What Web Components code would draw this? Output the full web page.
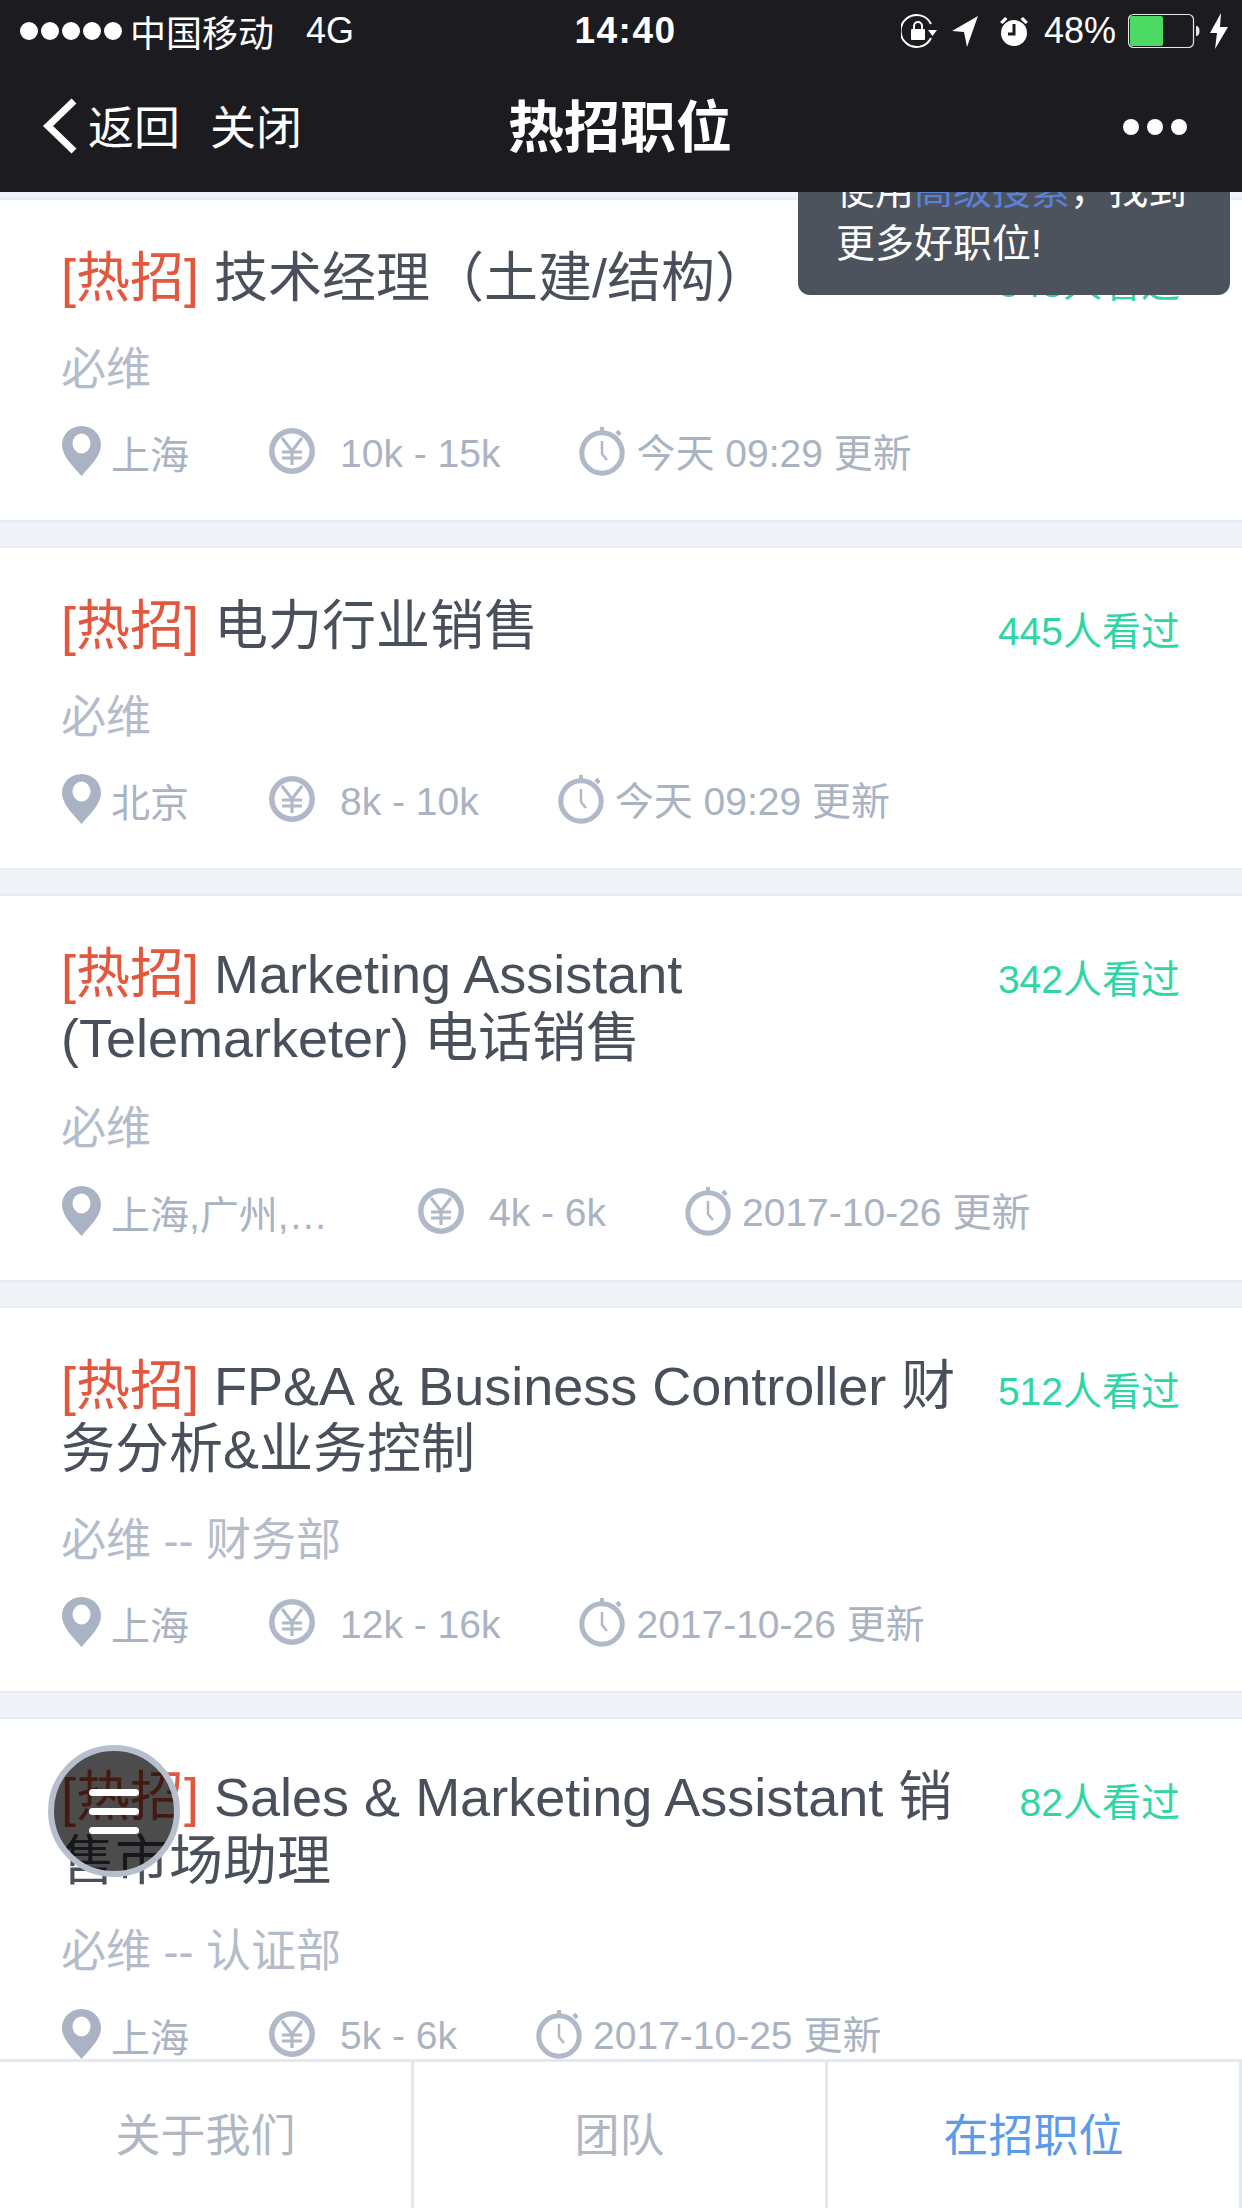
<!DOCTYPE html>
<html lang="zh">
<head>
<meta charset="utf-8">
<title>热招职位</title>
<style>
    html, body {
        margin: 0;
        padding: 0;
        height: 2208px;
        overflow: hidden;
        font-family: "Liberation Sans", "Noto Sans CJK SC", sans-serif;
    }
</style>
</head>
<body>
<job-app>
    <status-bar slot="top"></status-bar>
    <nav-bar slot="top" heading="热招职位"></nav-bar>
    <search-tip slot="overlay">使用<a>高级搜索</a>&#xFF0C;找到更多好职位!</search-tip>
    <menu-fab slot="overlay"></menu-fab>

    <job-card views="548" company="必维" place="上海" pay="10k - 15k" updated="今天 09:29 更新">技术经理&#xFF08;土建/结构&#xFF09;</job-card>
    <job-card views="445" company="必维" place="北京" pay="8k - 10k" updated="今天 09:29 更新">电力行业销售</job-card>
    <job-card views="342" company="必维" place="上海,广州,深圳,北京" pay="4k - 6k" updated="2017-10-26 更新">Marketing Assistant (Telemarketer) 电话销售</job-card>
    <job-card views="512" company="必维 -- 财务部" place="上海" pay="12k - 16k" updated="2017-10-26 更新">FP&amp;A &amp; Business Controller 财务分析&amp;业务控制</job-card>
    <job-card views="82" company="必维 -- 认证部" place="上海" pay="5k - 6k" updated="2017-10-25 更新">Sales &amp; Marketing Assistant 销售市场助理</job-card>

    <tab-bar slot="bottom"></tab-bar>
</job-app>

<script>
const FONT = `"Liberation Sans", "Noto Sans CJK SC", sans-serif`;

class JobApp extends HTMLElement {
    constructor() {
        super();
        this.attachShadow({ mode: "open" }).innerHTML = `
            <style>
                :host {
                    display: flex;
                    flex-direction: column;
                    position: relative;
                    height: 2208px;
                    overflow: hidden;
                    background: #f0f4f8;
                    font-family: ${FONT};
                }
                header { position: relative; z-index: 2; }
                main {
                    flex: 1;
                    min-height: 0;
                    overflow: hidden;
                    display: flex;
                    flex-direction: column;
                    gap: 24px;
                    padding-top: 6px;
                }
                footer { position: relative; z-index: 1; }
            </style>
            <header><slot name="top"></slot></header>
            <main><slot></slot></main>
            <footer><slot name="bottom"></slot></footer>
            <slot name="overlay"></slot>`;
    }
}

class StatusBar extends HTMLElement {
    constructor() {
        super();
        this.attachShadow({ mode: "open" }).innerHTML = `
            <style>
                :host {
                    display: flex;
                    align-items: center;
                    height: 62px;
                    padding: 0 14px 0 20px;
                    background: #1b1b20;
                    color: #fff;
                    font-size: 36px;
                }
                .left, .right { flex: 1; display: flex; align-items: center; }
                .right { justify-content: flex-end; }
                .dots { display: flex; gap: 3px; margin-right: 8px; }
                .dots i { width: 18px; height: 18px; border-radius: 50%; background: #fff; }
                .net { margin-left: 32px; }
                time { font-weight: bold; font-size: 37px; letter-spacing: 1.500px; margin-left: 3px; }
                svg { display: block; flex: none; }
                .pct { margin: 0 12px 0 14px; }
            </style>
            <div class="left">
                <span class="dots"><i></i><i></i><i></i><i></i><i></i></span>
                <span>中国移动</span><span class="net">4G</span>
            </div>
            <time>14:40</time>
            <div class="right">
                <svg width="36" height="36" viewBox="0 0 36 36" fill="none" stroke="#fff" stroke-width="2">
                    <path d="M30 11A16 16 0 1 0 30 25"/>
                    <path d="M27 17h9l-4.500 6z" fill="#fff" stroke="none"/>
                    <rect x="10" y="16" width="14" height="11" rx="1" fill="#fff" stroke="none"/>
                    <path d="M13 16v-3a4 4 0 0 1 8 0v3"/>
                </svg>
                <svg style="margin-left:14px" width="28" height="34" viewBox="0 0 28 34" fill="#fff">
                    <path d="M27 2L16 33l-3-15L1 17z"/>
                </svg>
                <svg style="margin-left:19px" width="32" height="34" viewBox="0 0 32 34">
                    <circle cx="16" cy="19" r="13" fill="#fff"/>
                    <path d="M2 8l5-5 2.500 2-5 5zM30 8l-5-5-2.500 2 5 5z" fill="#fff"/>
                    <path d="M16 10v10h-6" fill="none" stroke="#1b1b20" stroke-width="3"/>
                </svg>
                <span class="pct">48%</span>
                <svg width="72" height="36" viewBox="0 0 72 36">
                    <rect x="0.500" y="1.500" width="65" height="33" rx="5" fill="none" stroke="#e8e8e8" stroke-width="1.200"/>
                    <rect x="2" y="3" width="33" height="30" rx="2" fill="#4cd964"/>
                    <path d="M68 13c2.500 0 3.500 2 3.500 5s-1 5-3.500 5z" fill="#e8e8e8"/>
                </svg>
                <svg style="margin-left:10px" width="18" height="36" viewBox="0 0 18 36" fill="#fff">
                    <path d="M11 0L0 20h7l-2 16L18 14h-8z"/>
                </svg>
            </div>`;
    }
}

class NavBar extends HTMLElement {
    constructor() {
        super();
        this.attachShadow({ mode: "open" }).innerHTML = `
            <style>
                :host {
                    display: flex;
                    align-items: center;
                    position: relative;
                    box-sizing: border-box;
                    height: 130px;
                    padding: 0 55px 6px 42px;
                    background: #1b1b20;
                    color: #fff;
                    font-size: 46px;
                }
                svg { display: block; flex: none; margin-top: 4px; }
                .back { margin-left: 10px; }
                .close { margin-left: 30px; }
                h1 {
                    position: absolute;
                    left: 0;
                    right: 2px;
                    margin: -3px 0 0;
                    text-align: center;
                    font-size: 56px;
                    font-weight: bold;
                    pointer-events: none;
                }
                .more { margin-left: auto; margin-top: 6px; display: flex; gap: 8px; }
                .more i { width: 16px; height: 16px; border-radius: 50%; background: #fff; }
            </style>
            <svg width="36" height="56" viewBox="0 0 36 56" fill="none" stroke="#fff" stroke-width="7">
                <path d="M32 3L6 28l26 25"/>
            </svg>
            <span class="back">返回</span>
            <span class="close">关闭</span>
            <h1>${this.getAttribute("heading")}</h1>
            <span class="more"><i></i><i></i><i></i></span>`;
    }
}

class JobCard extends HTMLElement {
    constructor() {
        super();
        this.attachShadow({ mode: "open" });
    }

    connectedCallback() {
        const place = this.getAttribute("place");
        this.shadowRoot.innerHTML = `
            <style>
                :host {
                    display: block;
                    flex: none;
                    box-sizing: border-box;
                    padding: 47px 62px 45.500px 61px;
                    background: #fff;
                    border-top: 2px solid #e8edf3;
                    border-bottom: 2px solid #e8edf3;
                    font-family: ${FONT};
                }
                .top { display: flex; align-items: flex-start; }
                h2 {
                    flex: 1;
                    min-width: 0;
                    margin: 0;
                    font-size: 54px;
                    font-weight: normal;
                    line-height: 63.500px;
                    color: #4a505b;
                }
                h2 em { font-style: normal; color: #e2583f; }
                .views {
                    flex: none;
                    width: 220px;
                    margin-top: 12px;
                    text-align: right;
                    font-size: 39px;
                    line-height: 50px;
                    color: #2fd6a5;
                }
                .company {
                    margin-top: 34px;
                    font-size: 45px;
                    line-height: 50px;
                    color: #b4bccb;
                }
                .meta {
                    display: flex;
                    align-items: center;
                    margin-top: 30px;
                    height: 50px;
                    font-size: 39px;
                    color: #aab3c2;
                    white-space: nowrap;
                }
                svg { display: block; flex: none; margin-top: 3px; }
                .pin { margin-left: 1px; }
                .place {
                    margin: 5px 80px 0 10px;
                    max-width: 227px;
                    overflow: hidden;
                    text-overflow: ellipsis;
                }
                .pay { margin: 8px 79px 0 25px; }
                .updated { margin-left: 11px; }
            </style>
            <div class="top">
                <h2><em>[热招]</em> <slot></slot></h2>
                <div class="views">${this.getAttribute("views")}人看过</div>
            </div>
            <div class="company">${this.getAttribute("company")}</div>
            <div class="meta">
                <svg class="pin" width="39" height="50" viewBox="0 0 39 50">
                    <path d="M19.500 0C8.500 0 0 8.500 0 19c0 11 11 21 19.500 31C28 40 39 30 39 19 39 8.500 30.500 0 19.500 0z" fill="#a9b3c3"/>
                    <ellipse cx="19.500" cy="17.500" rx="9" ry="10" fill="#fff"/>
                </svg>
                <span class="place">${place}</span>
                <svg width="46" height="46" viewBox="0 0 46 46" fill="none" stroke="#b0b9c8">
                    <circle cx="23" cy="23" r="20.200" stroke-width="5.500"/>
                    <path d="M13 10l10 13 10-13M23 23v14M13 24h20M13 30h20" stroke-width="3.200"/>
                </svg>
                <span class="pay">${this.getAttribute("pay")}</span>
                <svg width="46" height="50" viewBox="0 0 46 50" fill="none" stroke="#b0b9c8">
                    <circle cx="23" cy="27" r="20.200" stroke-width="5"/>
                    <path d="M23 1v5M38 5l3 4" stroke-width="4"/>
                    <path d="M23 15v13l5 6" stroke-width="2.500"/>
                </svg>
                <span class="updated">${this.getAttribute("updated")}</span>
            </div>`;
    }
}

class SearchTip extends HTMLElement {
    constructor() {
        super();
        this.attachShadow({ mode: "open" }).innerHTML = `
            <style>
                :host {
                    position: absolute;
                    z-index: 1;
                    right: 12px;
                    top: 164px;
                    width: 432px;
                    box-sizing: border-box;
                    padding: 0 36px 0 38px;
                    height: 131px;
                    border-radius: 0 0 12px 12px;
                    background: #4d535c;
                    color: #fff;
                    font-size: 39px;
                    line-height: 53px;
                }
                ::slotted(a) { color: #5b80d8; }
            </style>
            <slot></slot>`;
    }
}

class MenuFab extends HTMLElement {
    constructor() {
        super();
        this.attachShadow({ mode: "open" }).innerHTML = `
            <style>
                :host {
                    position: absolute;
                    z-index: 1;
                    left: 48px;
                    top: 1745px;
                    width: 132px;
                    height: 132px;
                    box-sizing: border-box;
                    border: 6px solid #b7bfcd;
                    border-radius: 50%;
                    background: rgba(0, 0, 0, 0.7);
                    display: flex;
                    flex-direction: column;
                    align-items: center;
                    justify-content: center;
                    gap: 12px;
                }
                i { width: 50px; height: 7px; border-radius: 3.500px; background: #fff; }
            </style>
            <i></i><i></i><i></i>`;
    }
}

class TabBar extends HTMLElement {
    constructor() {
        super();
        this.attachShadow({ mode: "open" }).innerHTML = `
            <style>
                :host {
                    display: grid;
                    grid-template-columns: 414px 414px 414px;
                    height: 149px;
                    box-sizing: border-box;
                    border-top: 3px solid #e6e8f0;
                    background: #fff;
                    font-size: 45px;
                    color: #b0b7c4;
                }
                div {
                    display: flex;
                    align-items: center;
                    justify-content: center;
                    padding-bottom: 5px;
                    border-right: 3px solid #e6e8f0;
                }
                .on { color: #5b9bea; }
            </style>
            <div>关于我们</div>
            <div>团队</div>
            <div class="on">在招职位</div>`;
    }
}

customElements.define("job-app", JobApp);
customElements.define("status-bar", StatusBar);
customElements.define("nav-bar", NavBar);
customElements.define("job-card", JobCard);
customElements.define("search-tip", SearchTip);
customElements.define("menu-fab", MenuFab);
customElements.define("tab-bar", TabBar);
</script>
</body>
</html>
